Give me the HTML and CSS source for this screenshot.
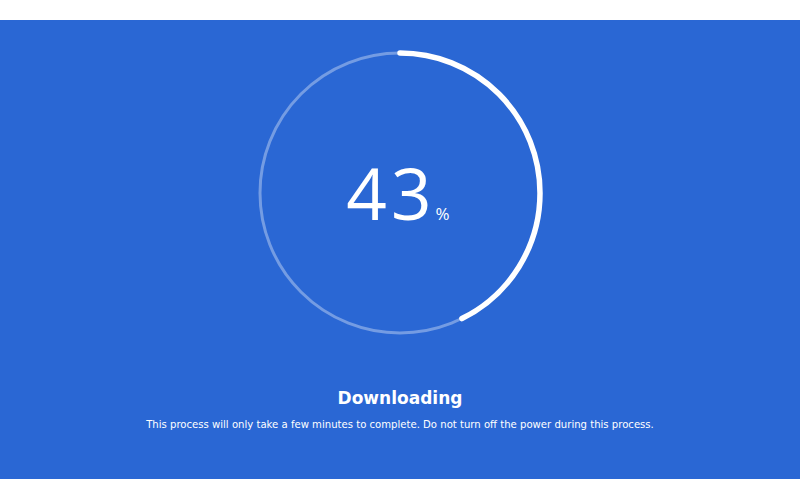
FILE: index.html
```html
<!DOCTYPE html>
<html lang="en">
<head>
    <meta charset="UTF-8">
    <meta name="viewport" content="width=device-width, initial-scale=1.0">
    <title>Downloading</title>
    <link rel="stylesheet" href="styles.css">
</head>
<body>
    <div class="panel">
        <div class="dial">
            <svg class="ring" width="290" height="290" viewBox="0 0 290 290">
                <circle class="track" cx="145" cy="145" r="140"></circle>
                <circle class="bar" cx="145" cy="145" r="140" stroke-dasharray="375.5 1000" transform="rotate(-90 145 145)"></circle>
            </svg>
            <div class="value"><span class="digits">43</span><span class="unit">%</span></div>
        </div>
        <h2 class="title">Downloading</h2>
        <p class="note">This process will only take a few minutes to complete. Do not turn off the power during this process.</p>
    </div>
</body>
</html>
```

FILE: styles.css
```css
body {
    margin: 0;
    background-color: #ffffff;
    font-family: "DejaVu Sans", Verdana, sans-serif;
}
.panel {
    margin-top: 20px;
    height: 459px;
    background-color: #2a67d4;
    color: white;
    display: flex;
    flex-direction: column;
    align-items: center;
    padding-top: 28px;
    box-sizing: border-box;
}
.dial {
    position: relative;
    width: 290px;
    height: 290px;
}
.ring {
    display: block;
}
.track {
    fill: none;
    stroke: rgba(255, 255, 255, 0.35);
    stroke-width: 3;
}
.bar {
    fill: none;
    stroke: #ffffff;
    stroke-width: 5.5;
    stroke-linecap: round;
}
.value {
    position: absolute;
    left: 0;
    right: 0;
    top: 110px;
    text-align: center;
    font-family: "Open Sans", sans-serif;
    font-weight: 400;
    line-height: 70px;
    padding-right: 4px;
}
.digits {
    font-size: 71px;
    letter-spacing: 4px;
}
.unit {
    font-size: 17px;
}
.title {
    margin: 48px 0 0;
    font-size: 17px;
    font-weight: bold;
    line-height: 24px;
}
.note {
    margin: 8px 0 0;
    font-size: 10.1px;
    line-height: 14px;
}
```
